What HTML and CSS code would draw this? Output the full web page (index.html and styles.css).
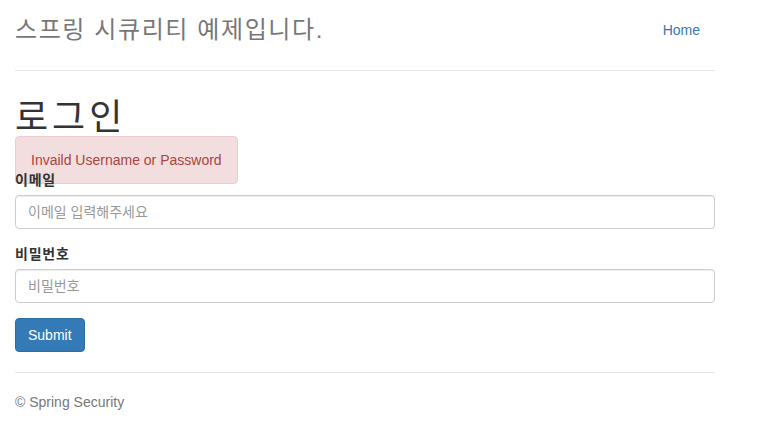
FILE: index.html
```html
<!DOCTYPE html>
<html lang="ko">
<head>
<meta charset="utf-8">
<title>스프링 시큐리티 예제</title>
<link rel="stylesheet" href="styles.css">
</head>
<body>
<div class="container">
  <header class="header">
    <h3 class="brand">스프링 시큐리티 예제입니다.</h3>
    <nav>
      <ul class="nav">
        <li><a href="#">Home</a></li>
      </ul>
    </nav>
  </header>
  <main class="login">
    <h1 class="title">로그인</h1>
    <div class="alert">Invaild Username or Password</div>
    <form class="form">
      <div class="form-group">
        <label class="label" for="email">이메일</label>
        <input class="input" id="email" type="text" placeholder="이메일 입력해주세요">
      </div>
      <div class="form-group">
        <label class="label" for="pw">비밀번호</label>
        <input class="input" id="pw" type="password" placeholder="비밀번호">
      </div>
      <button class="btn" type="submit">Submit</button>
    </form>
  </main>
  <footer class="footer">
    <p class="copy">© Spring Security</p>
  </footer>
</div>
</body>
</html>
```
FILE: styles.css
```css
* { box-sizing: border-box; }
html, body { margin: 0; padding: 0; background: #fff; }
body {
  font-family: "Liberation Sans", "Noto Sans CJK KR", sans-serif;
  font-size: 14px;
  line-height: 20px;
  color: #333;
  padding-top: 10px;
}
.container {
  width: 730px;
  padding: 0 15px;
}
.header {
  display: flex;
  justify-content: space-between;
  align-items: center;
  padding-bottom: 20px;
  border-bottom: 1px solid #e5e5e5;
}
.brand {
  margin: 0;
  font-size: 24px;
  line-height: 40px;
  font-weight: 400;
  letter-spacing: 1.6px;
  color: #777;
}
.nav { list-style: none; margin: 0; padding: 0; display: flex; }
.nav a {
  display: block;
  padding: 10px 15px;
  color: #337ab7;
  text-decoration: none;
  line-height: 20px;
}
.login {
  position: relative;
  padding-top: 27px;
}
.title {
  margin: 0;
  font-size: 36px;
  line-height: 40px;
  font-weight: 400;
  letter-spacing: 4px;
  color: #333;
}
.alert {
  position: absolute;
  left: 0;
  top: 65px;
  padding: 13px 15px;
  background: #f2dede;
  border: 1px solid #ebccd1;
  border-radius: 4px;
  color: #a94442;
}
.form { margin-top: 32px; margin-bottom: 20px; position: relative; }
.form-group { margin-bottom: 15px; }
.label {
  display: inline-block;
  margin-bottom: 5px;
  font-weight: 700;
  letter-spacing: 0.8px;
}
.input {
  display: block;
  width: 100%;
  height: 34px;
  padding: 6px 12px;
  font: inherit;
  color: #555;
  border: 1px solid #ccc;
  border-radius: 4px;
  box-shadow: inset 0 1px 1px rgba(0,0,0,.075);
}
.input::placeholder { color: #999; }
.btn {
  display: inline-block;
  height: 34px;
  padding: 6px 12px;
  font: inherit;
  color: #fff;
  background: #337ab7;
  border: 1px solid #2e6da4;
  border-radius: 4px;
}
.footer {
  padding-top: 19px;
  border-top: 1px solid #e5e5e5;
  color: #777;
}
.copy { margin: 0 0 10px; }
```
